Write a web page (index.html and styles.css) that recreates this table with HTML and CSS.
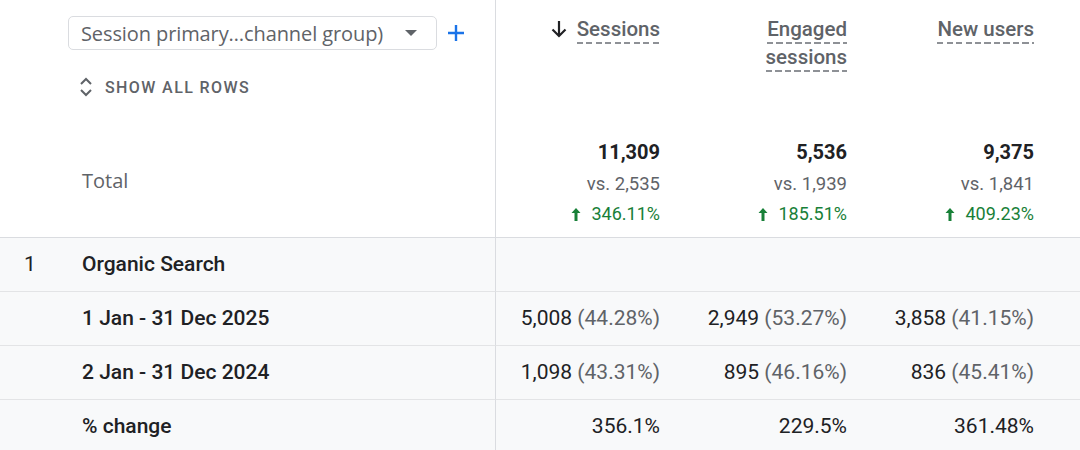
FILE: index.html
```html
<!DOCTYPE html>
<html>
<head>
<meta charset="utf-8">
<link rel="stylesheet" href="styles.css">
</head>
<body>
<div class="table">
  <div class="row head">
    <div class="dim-cell head-dim">
      <div class="picker-line">
        <div class="picker">
          <span class="picker-text">Session primary…channel group)</span>
          <svg class="caret" width="12" height="6" viewBox="0 0 12 6"><path d="M0 0h12L6 6z" fill="#5f6368"/></svg>
        </div>
        <svg class="plus" width="18" height="18" viewBox="0 0 18 18"><path d="M9 1v16M1 9h16" stroke="#1a73e8" stroke-width="2.4"/></svg>
      </div>
      <div class="show-all">
        <svg class="updown" width="14" height="22" viewBox="0 0 14 22"><path d="M2 8l5-5 5 5M2 14l5 5 5-5" fill="none" stroke="#5f6368" stroke-width="2"/></svg>
        <span>SHOW ALL ROWS</span>
      </div>
    </div>
    <div class="metric-cell head-metric">
      <svg class="sort" width="18" height="18" viewBox="0 0 18 18"><path d="M9 1v15M2.5 9.5L9 16l6.5-6.5" fill="none" stroke="#202124" stroke-width="2.2"/></svg>
      <span class="metric-name"><span class="dash">Sessions</span></span>
    </div>
    <div class="metric-cell head-metric">
      <span class="metric-name"><span class="dash">Engaged</span> <span class="dash">sessions</span></span>
    </div>
    <div class="metric-cell head-metric">
      <span class="metric-name"><span class="dash">New users</span></span>
    </div>
    <div class="pad-cell"></div>
  </div>

  <div class="row totals">
    <div class="dim-cell total-label">Total</div>
    <div class="metric-cell total-metric">
      <div class="t-main">11,309</div>
      <div class="t-vs">vs. 2,535</div>
      <div class="t-chg"><svg width="10" height="13" viewBox="0 0 10 13"><path d="M5 0L0.5 5h3v8h3V5h3z" fill="#188038"/></svg>346.11%</div>
    </div>
    <div class="metric-cell total-metric">
      <div class="t-main">5,536</div>
      <div class="t-vs">vs. 1,939</div>
      <div class="t-chg"><svg width="10" height="13" viewBox="0 0 10 13"><path d="M5 0L0.5 5h3v8h3V5h3z" fill="#188038"/></svg>185.51%</div>
    </div>
    <div class="metric-cell total-metric">
      <div class="t-main">9,375</div>
      <div class="t-vs">vs. 1,841</div>
      <div class="t-chg"><svg width="10" height="13" viewBox="0 0 10 13"><path d="M5 0L0.5 5h3v8h3V5h3z" fill="#188038"/></svg>409.23%</div>
    </div>
    <div class="pad-cell"></div>
  </div>

  <div class="row body">
    <div class="dim-cell body-dim"><span class="num">1</span><span class="label">Organic Search</span></div>
    <div class="metric-cell"></div>
    <div class="metric-cell"></div>
    <div class="metric-cell"></div>
    <div class="pad-cell"></div>
  </div>
  <div class="row body">
    <div class="dim-cell body-dim"><span class="num"></span><span class="label">1 Jan - 31 Dec 2025</span></div>
    <div class="metric-cell val">5,008 <span class="pct">(44.28%)</span></div>
    <div class="metric-cell val">2,949 <span class="pct">(53.27%)</span></div>
    <div class="metric-cell val">3,858 <span class="pct">(41.15%)</span></div>
    <div class="pad-cell"></div>
  </div>
  <div class="row body">
    <div class="dim-cell body-dim"><span class="num"></span><span class="label">2 Jan - 31 Dec 2024</span></div>
    <div class="metric-cell val">1,098 <span class="pct">(43.31%)</span></div>
    <div class="metric-cell val">895 <span class="pct">(46.16%)</span></div>
    <div class="metric-cell val">836 <span class="pct">(45.41%)</span></div>
    <div class="pad-cell"></div>
  </div>
  <div class="row body">
    <div class="dim-cell body-dim"><span class="num"></span><span class="label">% change</span></div>
    <div class="metric-cell val">356.1%</div>
    <div class="metric-cell val">229.5%</div>
    <div class="metric-cell val">361.48%</div>
    <div class="pad-cell"></div>
  </div>
</div>
</body>
</html>
```

FILE: styles.css
```css
* { box-sizing: border-box; }
html, body {
  margin: 0;
  padding: 0;
  background: #ffffff;
}
body {
  font-family: Roboto, "Liberation Sans", sans-serif;
  color: #202124;
  font-size: 21px;
  width: 1080px;
  height: 450px;
  overflow: hidden;
}
.table {
  display: grid;
  grid-template-columns: 496px 187px 187px 187px 1fr;
}
.row {
  display: contents;
}
.dim-cell {
  border-right: 1px solid #dadce0;
}
.metric-cell {
  text-align: right;
  padding-right: 23px;
}

/* header */
.head > div {
  height: 124px;
}
.head-dim {
  padding: 16px 0 0 68px;
}
.picker-line {
  display: flex;
  align-items: center;
  gap: 10px;
}
.picker {
  width: 369px;
  height: 34px;
  border: 1px solid #dadce0;
  border-radius: 5px;
  display: flex;
  align-items: center;
  padding: 0 19px 0 12px;
  justify-content: space-between;
}
.picker-text {
  font-family: "Open Sans", Roboto, sans-serif;
  font-size: 20px;
  color: #5f6368;
  letter-spacing: -0.1px;
  white-space: nowrap;
}
.caret { display: block; }
.plus { display: block; }
.show-all {
  margin-top: 26px;
  display: flex;
  align-items: center;
  gap: 12px;
  padding-left: 11px;
  color: #5f6368;
  font-size: 16px;
  font-weight: 500;
  letter-spacing: 1.4px;
}
.updown { display: block; }
.head-metric {
  padding-top: 15px;
  line-height: 28px;
  display: flex;
  justify-content: flex-end;
  align-items: flex-start;
  gap: 9px;
}
.sort {
  margin-top: 5px;
}
.metric-name {
  max-width: 100px;
  font-size: 20.5px;
  font-weight: 500;
  color: #5f6368;
  text-align: right;
}
.dash {
  padding-bottom: 3px;
  background-image: repeating-linear-gradient(to right, #8e9196 0 6px, transparent 6px 9.5px);
  background-size: 100% 2px;
  background-repeat: no-repeat;
  background-position: left bottom;
  -webkit-box-decoration-break: clone;
  box-decoration-break: clone;
}

/* totals */
.totals > div {
  height: 114px;
  border-bottom: 1px solid #dadce0;
}
.total-label {
  display: flex;
  align-items: center;
  padding-left: 82px;
  font-family: "Open Sans", Roboto, sans-serif;
  color: #5f6368;
  font-size: 20px;
}
.total-metric {
  padding-top: 13px;
}
.total-metric > div {
  line-height: 30px;
}
.t-main {
  font-size: 20px;
  font-weight: 700;
  color: #202124;
}
.t-vs {
  margin-top: 2px;
  color: #5f6368;
  font-size: 18.5px;
}
.t-chg {
  color: #188038;
  font-size: 18px;
  display: flex;
  justify-content: flex-end;
  align-items: center;
  gap: 10px;
}
.t-chg svg { display: block; }

/* body */
.body > div {
  height: 54px;
  padding-bottom: 2px;
  background: #f8f9fa;
  border-bottom: 1px solid #e3e4e6;
  display: flex;
  align-items: center;
}
.body > .metric-cell {
  justify-content: flex-end;
  white-space: pre;
}
.body-dim {
  padding-left: 24px;
}
.num {
  width: 58px;
  color: #202124;
}
.label {
  font-weight: 500;
  color: #202124;
}
.pct {
  color: #5f6368;
}
```
